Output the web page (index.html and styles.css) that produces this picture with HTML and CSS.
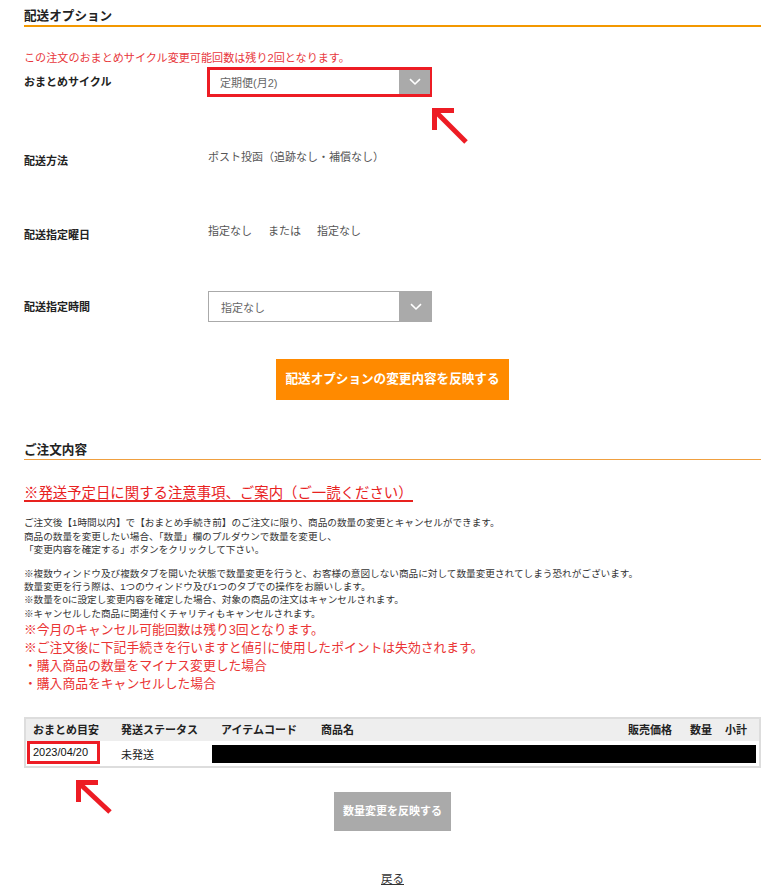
FILE: index.html
```html
<!DOCTYPE html>
<html lang="ja">
<head>
<meta charset="utf-8">
<title>配送オプション</title>
<link rel="stylesheet" href="styles.css">
</head>
<body>
<div class="page">
  <h2 class="sec-title">配送オプション</h2>
  <p class="notice">この注文のおまとめサイクル変更可能回数は残り2回となります。</p>

  <div class="form-row row-first">
    <div class="label">おまとめサイクル</div>
    <div class="select select-hl">
      <span class="select-text">定期便(月2)</span>
      <span class="select-btn"><svg width="12" height="8" viewBox="0 0 12 8"><polyline points="1,1.2 6,6 11,1.2" fill="none" stroke="#fff" stroke-width="1.6"/></svg></span>
    </div>
  </div>

  <div class="form-row row-text row-gap1">
    <div class="label">配送方法</div>
    <div class="value">ポスト投函（追跡なし・補償なし）</div>
  </div>

  <div class="form-row row-text row-gap2">
    <div class="label">配送指定曜日</div>
    <div class="value"><span>指定なし</span><span class="or">または</span><span>指定なし</span></div>
  </div>

  <div class="form-row row-gap1 row-tall">
    <div class="label">配送指定時間</div>
    <div class="select select-plain">
      <span class="select-text">指定なし</span>
      <span class="select-btn"><svg width="12" height="8" viewBox="0 0 12 8"><polyline points="1,1.2 6,6 11,1.2" fill="none" stroke="#fff" stroke-width="1.6"/></svg></span>
    </div>
  </div>

  <div class="btn-orange">配送オプションの変更内容を反映する</div>

  <h2 class="sec-title sec-title2">ご注文内容</h2>

  <p class="red-heading">※発送予定日に関する注意事項、ご案内（ご一読ください）</p>

  <p class="note note1">ご注文後【1時間以内】で【おまとめ手続き前】のご注文に限り、商品の数量の変更とキャンセルができます。<br>商品の数量を変更したい場合、「数量」欄のプルダウンで数量を変更し、<br>「変更内容を確定する」ボタンをクリックして下さい。</p>

  <p class="note note2">※複数ウィンドウ及び複数タブを開いた状態で数量変更を行うと、お客様の意図しない商品に対して数量変更されてしまう恐れがございます。<br>数量変更を行う際は、1つのウィンドウ及び1つのタブでの操作をお願いします。<br>※数量を0に設定し変更内容を確定した場合、対象の商品の注文はキャンセルされます。<br>※キャンセルした商品に関連付くチャリティもキャンセルされます。</p>

  <p class="red-lines">※今月のキャンセル可能回数は残り3回となります。<br>※ご注文後に下記手続きを行いますと値引に使用したポイントは失効されます。<br>・購入商品の数量をマイナス変更した場合<br>・購入商品をキャンセルした場合</p>

  <div class="order-table">
    <div class="trow thead">
      <div class="c1">おまとめ目安</div>
      <div>発送ステータス</div>
      <div>アイテムコード</div>
      <div>商品名</div>
      <div>販売価格</div>
      <div>数量</div>
      <div>小計</div>
    </div>
    <div class="trow tbody">
      <div class="date-box">2023/04/20</div>
      <div>未発送</div>
      <div class="black-bar"></div>
    </div>
  </div>

  <div class="btn-gray">数量変更を反映する</div>

  <div class="back"><a href="#">戻る</a></div>
</div>

<svg class="arrow arrow1" width="40" height="40" viewBox="0 0 40 40"><polyline points="22,2.5 2.5,2.5 2.5,22" fill="none" stroke="#ed1c24" stroke-width="5"/><line x1="3" y1="3" x2="34" y2="34" stroke="#ed1c24" stroke-width="5"/></svg>
<svg class="arrow arrow2" width="40" height="40" viewBox="0 0 40 40"><polyline points="22,2.5 2.5,2.5 2.5,22" fill="none" stroke="#ed1c24" stroke-width="5"/><line x1="3" y1="3" x2="34" y2="32" stroke="#ed1c24" stroke-width="5"/></svg>
</body>
</html>
```

FILE: styles.css
```css
html, body {
  margin: 0;
  padding: 0;
  background: #fff;
}
body {
  position: relative;
  font-family: "Liberation Sans", "Noto Sans CJK JP", sans-serif;
  color: #222;
  font-size: 11px;
}
.page {
  padding: 0 11px 0 24px;
}
p { margin: 0; }

.sec-title {
  margin: 0;
  font-size: 12.6px;
  font-weight: bold;
  line-height: 16px;
  padding-top: 8px;
  padding-bottom: 1px;
  border-bottom: 2px solid #f39800;
  color: #222;
}
.sec-title2 {
  margin-top: 34px;
  border-bottom: 1px solid #f0a040;
}

.notice {
  margin-top: 23px;
  font-size: 11.1px;
  line-height: 16px;
  color: #e8383d;
}

.form-row {
  display: flex;
  align-items: center;
  height: 30px;
}
.row-first { margin-top: 1px; }
.row-gap1 { margin-top: 45px; }
.row-gap2 { margin-top: 44px; }
.row-tall { height: 31px; }
.label {
  width: 184px;
  flex: none;
  font-weight: bold;
  font-size: 11px;
  line-height: 16px;
  color: #222;
}
.row-text { align-items: flex-start; }
.row-text .label { padding-top: 11px; }
.row-text .value {
  padding-top: 7px;
  font-size: 11px;
  line-height: 16px;
  color: #555;
}
.value .or { margin: 0 16px; }

.select {
  box-sizing: border-box;
  display: flex;
  align-items: stretch;
  background: #fff;
}
.select-hl {
  width: 225px;
  height: 30px;
  margin-left: -1px;
  border: 3px solid #ed1c24;
}
.select-plain {
  width: 224px;
  height: 31px;
  border: 1px solid #aaa;
}
.select-text {
  flex: 1;
  padding-left: 10px;
  font-size: 11px;
  color: #666;
  display: flex;
  align-items: center;
}
.select-plain .select-text { padding-left: 12px; }
.select-btn {
  width: 30px;
  background: #aaa;
  display: flex;
  align-items: center;
  justify-content: center;
}
.select-hl .select-btn { margin-right: -1px; width: 31px; }
.select-plain .select-btn {
  width: 33px;
  margin: -1px -1px -1px 0;
}

.btn-orange {
  width: 233px;
  height: 41px;
  margin: 37px auto 0;
  background: #ff8a00;
  color: #fff;
  font-weight: bold;
  font-size: 12.6px;
  line-height: 41px;
  text-align: center;
}

.red-heading {
  margin-top: 26px;
  width: fit-content;
  font-size: 14.4px;
  line-height: 14px;
  color: #e8221f;
  border-bottom: 2px solid #e8221f;
}

.note {
  font-size: 9.65px;
  line-height: 13.5px;
  color: #333;
}
.note1 { margin-top: 14px; }
.note2 { margin-top: 10px; line-height: 13.4px; }

.red-lines {
  margin-top: 1px;
  font-size: 12.8px;
  line-height: 18px;
  color: #ea3434;
}

.order-table {
  margin-top: 24px;
  border: 2px solid #ddd;
}
.trow {
  display: grid;
  grid-template-columns: 86px 100px 100px 307px 62px 35px 1fr;
  font-size: 11px;
}
.trow > div { padding-left: 9px; }
.thead {
  height: 22px;
  align-items: center;
  background: #eee;
  font-weight: bold;
  color: #222;
  line-height: 16px;
}
.thead > .c1 { padding-left: 7px; }
.tbody {
  height: 25px;
  align-items: center;
  color: #222;
}
.tbody > .date-box {
  box-sizing: border-box;
  align-self: start;
  margin-left: 1px;
  width: 73px;
  height: 23px;
  border: 3px solid #ed1c24;
  padding-left: 3px;
  line-height: 17px;
  color: #111;
}
.tbody > .black-bar {
  grid-column: 3 / 8;
  padding: 0;
  height: 18px;
  margin-right: 3px;
  background: #000;
}

.btn-gray {
  width: 117px;
  height: 39px;
  margin: 24px auto 0;
  background: #aaa;
  color: #fff;
  font-weight: bold;
  font-size: 11px;
  line-height: 39px;
  text-align: center;
}

.back {
  margin-top: 40px;
  text-align: center;
  line-height: 16px;
  font-size: 11.5px;
}
.back a {
  color: #333;
  text-decoration: underline;
}

.arrow {
  position: absolute;
}
.arrow1 { left: 432px; top: 108px; }
.arrow2 { left: 76px; top: 780px; }
```
